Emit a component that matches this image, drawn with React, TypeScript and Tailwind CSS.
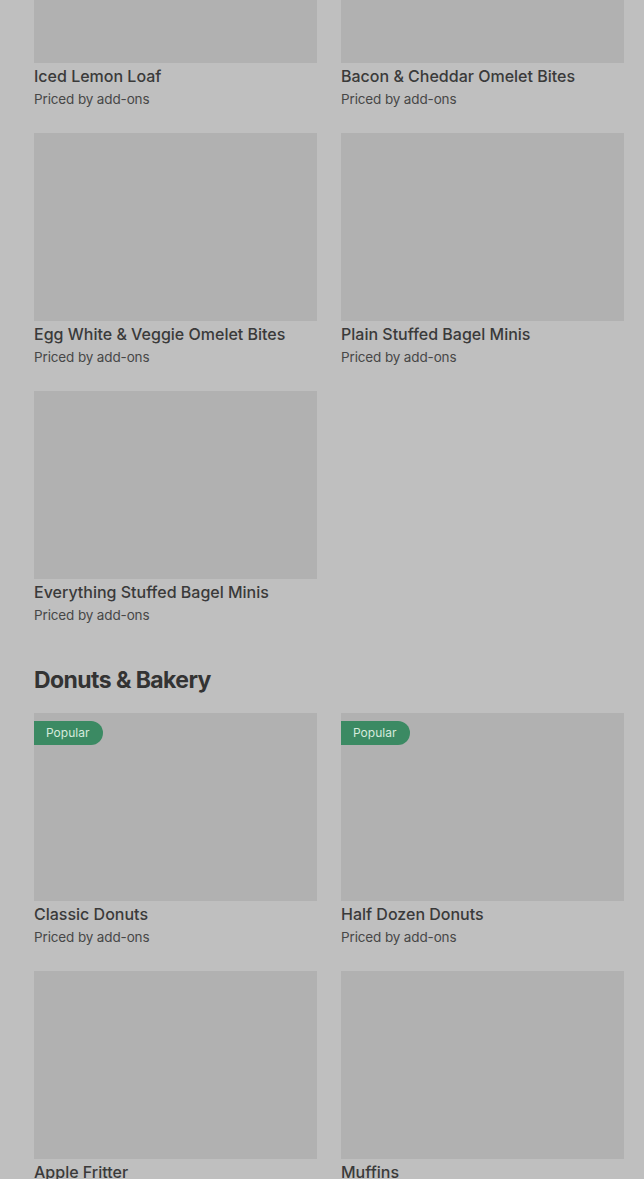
import React from "react";

type Item = { name: string; popular?: boolean };

const breakfast: Item[] = [
  { name: "Iced Lemon Loaf" },
  { name: "Bacon & Cheddar Omelet Bites" },
  { name: "Egg White & Veggie Omelet Bites" },
  { name: "Plain Stuffed Bagel Minis" },
  { name: "Everything Stuffed Bagel Minis" },
];

const bakery: Item[] = [
  { name: "Classic Donuts", popular: true },
  { name: "Half Dozen Donuts", popular: true },
  { name: "Apple Fritter" },
  { name: "Muffins" },
];

function Card({ item }: { item: Item }) {
  return (
    <div className="flex flex-col">
      <div className="relative h-[188px] w-full bg-[#b1b1b1]">
        {item.popular && (
          <span className="absolute left-0 top-2 flex h-6 items-center rounded-r-full bg-[#3b8a63] pl-3 pr-[14px] text-[12px] text-[#d6eadd]">
            Popular
          </span>
        )}
      </div>
      <p className="mt-px text-[16px] leading-6 font-medium text-[#3a3a3a]">{item.name}</p>
      <p className="mt-px text-[13.5px] leading-5 tracking-[-0.01em] text-[#474747]">Priced by add-ons</p>
    </div>
  );
}

export default function App() {
  return (
    <div
      className="min-h-[1179px] w-full overflow-hidden bg-[#bfbfbf] pl-[34px] pr-5"
      style={{ fontFamily: "Inter, 'Noto Sans', sans-serif" }}
    >
      {/* Previous section, scrolled partway */}
      <div className="-mt-[125px] grid grid-cols-2 gap-x-6 gap-y-6">
        {breakfast.map((item) => (
          <Card key={item.name} item={item} />
        ))}
      </div>

      {/* Donuts & Bakery */}
      <h2 className="mt-[39px] mb-[17px] text-[23px] leading-8 font-bold tracking-tight text-[#333333]">
        Donuts &amp; Bakery
      </h2>
      <div className="grid grid-cols-2 gap-x-6 gap-y-6">
        {bakery.map((item) => (
          <Card key={item.name} item={item} />
        ))}
      </div>
    </div>
  );
}
